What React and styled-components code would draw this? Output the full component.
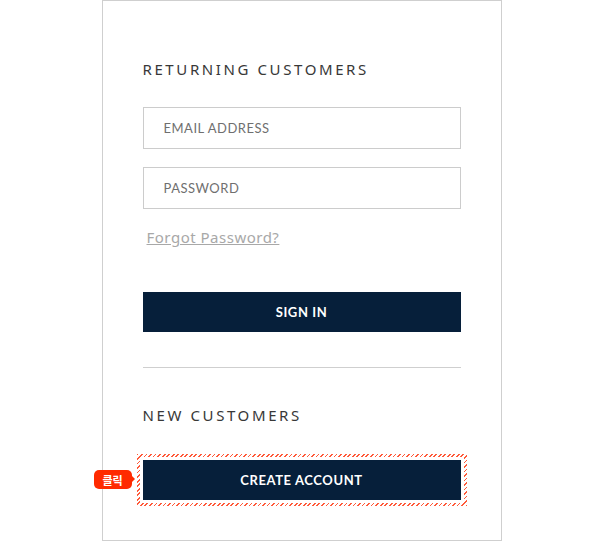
import React from "react";
import styled, { createGlobalStyle } from "styled-components";

const GlobalStyle = createGlobalStyle`
  html, body {
    margin: 0;
    padding: 0;
    background: #ffffff;
  }
`;

const Page = styled.div`
  display: flex;
  justify-content: center;
  width: 600px;
  height: 541px;
  padding-left: 3px;
  box-sizing: border-box;
`;

const Panel = styled.section`
  display: flex;
  flex-direction: column;
  width: 400px;
  height: 541px;
  box-sizing: border-box;
  padding: 58px 40px 0;
  border: 1px solid #cfcfcf;
  font-family: Lato, "Liberation Sans", sans-serif;
`;

const Heading = styled.h2`
  margin: ${({ $gap = 0 }) => $gap}px 0 0;
  font-family: "Noto Sans", Lato, sans-serif;
  font-size: 15px;
  line-height: 20px;
  font-weight: 400;
  letter-spacing: 2.6px;
  color: #383838;
`;

const Field = styled.input`
  box-sizing: border-box;
  width: 100%;
  height: 42px;
  margin-top: ${({ $gap }) => $gap}px;
  padding: 0 20px;
  border: 1px solid #cccccc;
  outline: 0;
  font-family: Lato, sans-serif;
  font-size: 13px;
  letter-spacing: 0.5px;
  color: #333333;

  &::placeholder {
    color: #6f6f6f;
  }
`;

const Forgot = styled.a`
  align-self: flex-start;
  margin: 18px 0 0 4px;
  font-family: "Noto Sans", sans-serif;
  font-size: 15px;
  line-height: 20px;
  letter-spacing: 0.5px;
  color: #a8a8a8;
  text-decoration: underline;
`;

const Action = styled.button`
  position: relative;
  display: block;
  width: 100%;
  height: 40px;
  margin-top: ${({ $gap = 0 }) => $gap}px;
  border: 0;
  background: #061f3a;
  color: #ffffff;
  font-family: Lato, sans-serif;
  font-size: 13px;
  font-weight: 700;
  letter-spacing: 0.6px;
  cursor: pointer;
`;

const Divider = styled.hr`
  width: 100%;
  margin: 35px 0 0;
  border: 0;
  border-top: 1px solid #cfcfcf;
`;

const Marked = styled.div`
  position: relative;
  margin-top: ${({ $gap }) => $gap}px;
`;

const Hatch = styled.span`
  position: absolute;
  inset: -6px;
  background: repeating-linear-gradient(
    -45deg,
    #ff5a3a 0 1.2px,
    #ffffff 1.2px 3.2px
  );

  &::after {
    content: "";
    position: absolute;
    inset: 3px;
    background: #ffffff;
  }
`;

const Badge = styled.span`
  position: absolute;
  top: 10px;
  right: calc(100% + 11px);
  display: flex;
  align-items: center;
  justify-content: center;
  width: 38px;
  height: 19px;
  border-radius: 5px;
  background: #ff2a00;
  color: #ffffff;
  font-family: "Noto Sans CJK KR", sans-serif;
  font-size: 11px;
  font-weight: 700;

  &::after {
    content: "";
    position: absolute;
    right: -3px;
    top: 6px;
    border-left: 3px solid #ff2a00;
    border-top: 3.5px solid transparent;
    border-bottom: 3.5px solid transparent;
  }
`;

export default function App() {
  return (
    <>
      <GlobalStyle />
      <Page>
        <Panel>
          <Heading>RETURNING CUSTOMERS</Heading>
          <Field $gap={28} type="email" placeholder="EMAIL ADDRESS" />
          <Field $gap={18} type="password" placeholder="PASSWORD" />
          <Forgot href="#">Forgot Password?</Forgot>
          <Action $gap={45} type="button">SIGN IN</Action>
          <Divider />
          <Heading $gap={37}>NEW CUSTOMERS</Heading>
          <Marked $gap={35}>
            <Hatch />
            <Badge>클릭</Badge>
            <Action type="button">CREATE ACCOUNT</Action>
          </Marked>
        </Panel>
      </Page>
    </>
  );
}
